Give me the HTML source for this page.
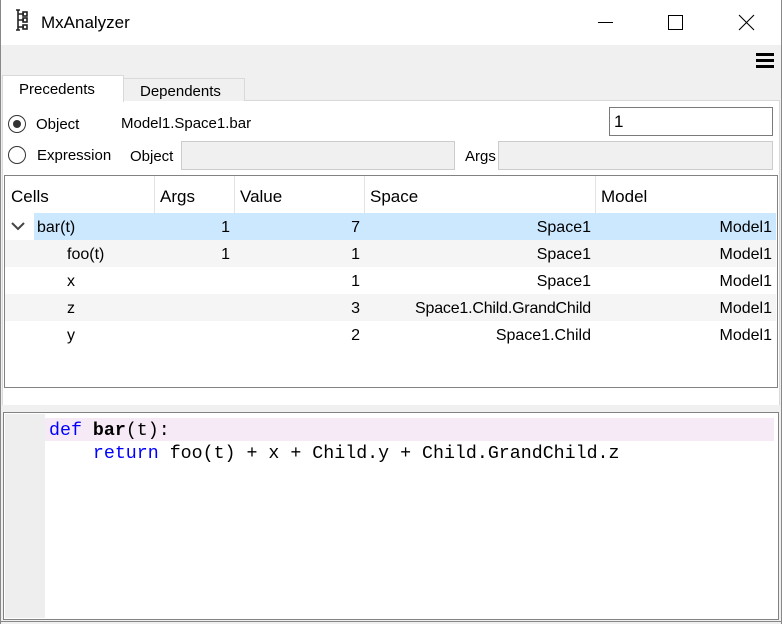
<!DOCTYPE html>
<html><head><meta charset="utf-8"><style>
*{margin:0;padding:0;box-sizing:border-box}
body{width:782px;height:624px;position:relative;overflow:hidden;background:#f0f0f0;font-family:"Liberation Sans","Noto Sans CJK JP",sans-serif;color:#000}
.a{position:absolute}
.t{position:absolute;font-size:16px;line-height:20px;white-space:nowrap}
.r{text-align:right}
.radio{position:absolute;width:18px;height:18px;border:1px solid #333;border-radius:50%;background:#fff}
.mono{font-family:"Liberation Mono",monospace;font-size:18.3px;line-height:23px;white-space:pre;position:absolute}
</style></head><body>
<div class="a" style="left:0;top:0;width:782px;height:45px;background:#fff"></div>
<svg class="a" style="left:14px;top:9px" width="20" height="22" viewBox="0 0 20 22"><g fill="none" stroke="#222" stroke-width="1.6"><path d="M4 1v20M2 1h4M2 21h4M4 5h6M4 11h6M4 18h6"/><rect x="9" y="3" width="4" height="4"/><rect x="9" y="9" width="4" height="4"/><rect x="9" y="16" width="4" height="4"/></g></svg>
<div class="t" style="left:41px;top:13px;font-size:17px">MxAnalyzer</div>
<div class="a" style="left:598px;top:22px;width:15px;height:1px;background:#000"></div>
<div class="a" style="left:668px;top:15px;width:15px;height:15px;border:1px solid #000"></div>
<svg class="a" style="left:738px;top:14px" width="17" height="17"><path d="M1 1L16 16M16 1L1 16" stroke="#000" stroke-width="1.1"/></svg>
<div class="a" style="left:756px;top:53px;width:18px;height:3px;background:#000"></div>
<div class="a" style="left:756px;top:59px;width:18px;height:3px;background:#000"></div>
<div class="a" style="left:756px;top:65px;width:18px;height:3px;background:#000"></div>
<div class="a" style="left:2px;top:100px;width:778px;height:306px;background:#fff;border:1px solid #d9d9d9"></div>
<div class="a" style="left:123px;top:78px;width:122px;height:23px;background:#f0f0f0;border:1px solid #d9d9d9;border-bottom:none"></div>
<div class="a" style="left:2px;top:75px;width:122px;height:27px;background:#fff;border:1px solid #d9d9d9;border-bottom:none"></div>
<div class="t" style="left:19px;top:80px;font-size:15px">Precedents</div>
<div class="t" style="left:140px;top:82px;font-size:15px">Dependents</div>
<div class="radio" style="left:8px;top:115px"></div>
<div class="a" style="left:13px;top:120px;width:8px;height:8px;border-radius:50%;background:#333"></div>
<div class="t" style="left:36px;top:115px;font-size:15px">Object</div>
<div class="t" style="left:121px;top:114px;font-size:15px">Model1.Space1.bar</div>
<div class="a" style="left:609px;top:107px;width:164px;height:29px;border:1px solid #7a7a7a;background:#fff"></div>
<div class="t" style="left:614px;top:112px;font-size:17px">1</div>
<div class="radio" style="left:8px;top:146px"></div>
<div class="t" style="left:37px;top:146px;font-size:15px">Expression</div>
<div class="t" style="left:130px;top:147px;font-size:15px">Object</div>
<div class="a" style="left:181px;top:141px;width:274px;height:29px;border:1px solid #ccc;background:#f0f0f0"></div>
<div class="t" style="left:465px;top:147px;font-size:15px">Args</div>
<div class="a" style="left:498px;top:141px;width:275px;height:29px;border:1px solid #ccc;background:#f0f0f0"></div>
<div class="a" style="left:4px;top:175px;width:774px;height:213px;border:1px solid #828282;background:#fff"></div>
<div class="a" style="left:154px;top:176px;width:1px;height:37px;background:#e3e3e3"></div>
<div class="a" style="left:234px;top:176px;width:1px;height:37px;background:#e3e3e3"></div>
<div class="a" style="left:364px;top:176px;width:1px;height:37px;background:#e3e3e3"></div>
<div class="a" style="left:595px;top:176px;width:1px;height:37px;background:#e3e3e3"></div>
<div class="t" style="left:11px;top:187px;font-size:17px">Cells</div>
<div class="t" style="left:160px;top:187px;font-size:17px">Args</div>
<div class="t" style="left:240px;top:187px;font-size:17px">Value</div>
<div class="t" style="left:370px;top:187px;font-size:17px">Space</div>
<div class="t" style="left:601px;top:187px;font-size:17px">Model</div>
<div class="a" style="left:34px;top:213px;width:742px;height:27px;background:#cce8ff"></div>
<div class="a" style="left:5px;top:240px;width:771px;height:27px;background:#f5f5f5"></div>
<div class="a" style="left:5px;top:294px;width:771px;height:27px;background:#f5f5f5"></div>
<svg class="a" style="left:11px;top:221px" width="14" height="10"><path d="M1 2L7 8L13 2" fill="none" stroke="#444" stroke-width="2"/></svg>
<div class="t" style="left:37px;top:218px">bar(t)</div>
<div class="t r" style="left:150px;top:218px;width:80px">1</div>
<div class="t r" style="left:240px;top:218px;width:120px">7</div>
<div class="t r" style="left:370px;top:218px;width:221px">Space1</div>
<div class="t r" style="left:600px;top:218px;width:172px">Model1</div>
<div class="t" style="left:67px;top:245px">foo(t)</div>
<div class="t r" style="left:150px;top:245px;width:80px">1</div>
<div class="t r" style="left:240px;top:245px;width:120px">1</div>
<div class="t r" style="left:370px;top:245px;width:221px">Space1</div>
<div class="t r" style="left:600px;top:245px;width:172px">Model1</div>
<div class="t" style="left:67px;top:272px">x</div>
<div class="t r" style="left:240px;top:272px;width:120px">1</div>
<div class="t r" style="left:370px;top:272px;width:221px">Space1</div>
<div class="t r" style="left:600px;top:272px;width:172px">Model1</div>
<div class="t" style="left:67px;top:299px">z</div>
<div class="t r" style="left:240px;top:299px;width:120px">3</div>
<div class="t r" style="left:360px;top:299px;width:231px;letter-spacing:-0.2px">Space1.Child.GrandChild</div>
<div class="t r" style="left:600px;top:299px;width:172px">Model1</div>
<div class="t" style="left:67px;top:326px">y</div>
<div class="t r" style="left:240px;top:326px;width:120px">2</div>
<div class="t r" style="left:370px;top:326px;width:221px">Space1.Child</div>
<div class="t r" style="left:600px;top:326px;width:172px">Model1</div>
<div class="a" style="left:2px;top:405px;width:778px;height:8px;background:#f0f0f0"></div>
<div class="a" style="left:3px;top:412px;width:776px;height:208px;border:1px solid #828282;background:#fff"></div>
<div class="a" style="left:5px;top:414px;width:40px;height:204px;background:#eeeeee"></div>
<div class="a" style="left:45px;top:418px;width:729px;height:23px;background:#f7eaf7"></div>
<div class="mono" style="left:49px;top:420px"><span style="color:#0000ff">def</span> <b>bar</b>(t):</div>
<div class="mono" style="left:49px;top:443px">    <span style="color:#0000ff">return</span> foo(t) + x + Child.y + Child.GrandChild.z</div>
<div class="a" style="left:0;top:0;width:1px;height:624px;background:#888"></div>
<div class="a" style="left:781px;top:0;width:1px;height:624px;background:#888"></div>
<div class="a" style="left:0;top:621px;width:782px;height:1px;background:#888"></div>
</body></html>
